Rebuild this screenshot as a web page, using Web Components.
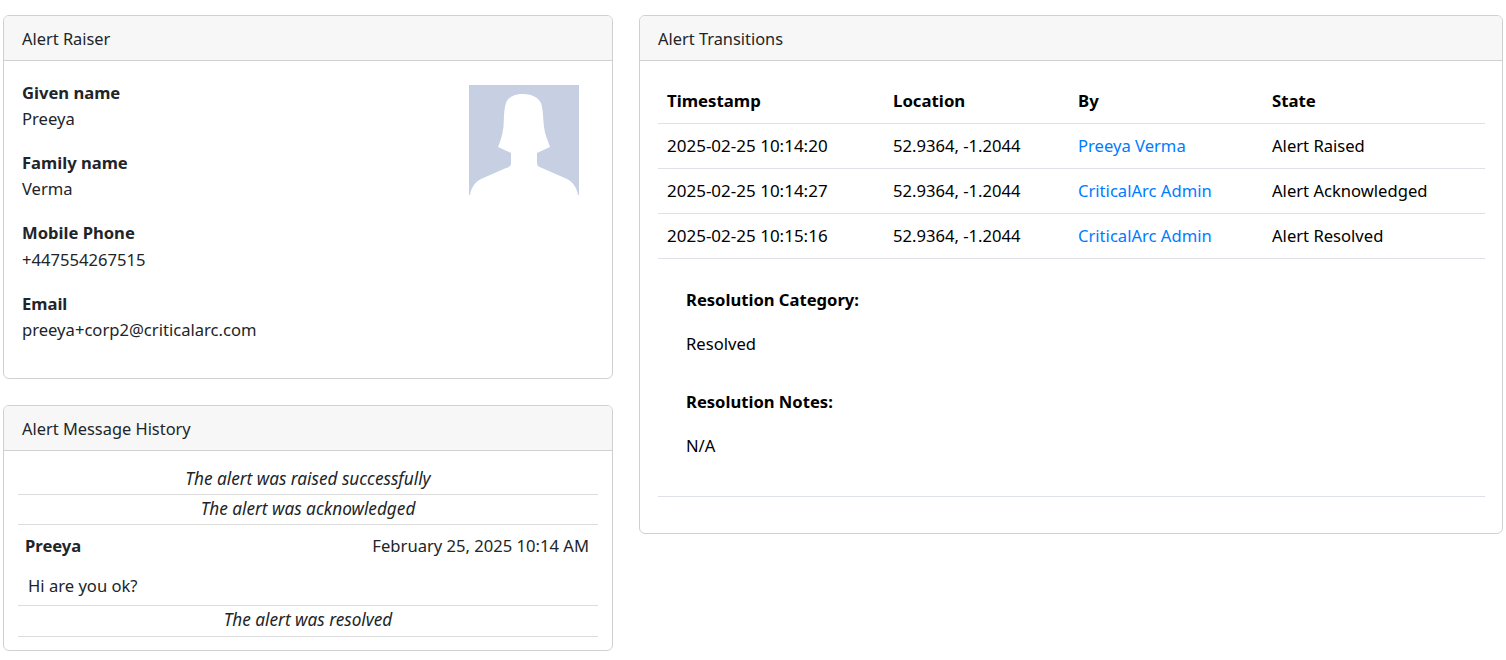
<!DOCTYPE html>
<html><head><meta charset="utf-8"><style>
html,body{margin:0;background:#fff}
body{font:16.6px/24px "Noto Sans",sans-serif;color:#212529}
</style></head><body>
<alert-page>
  <div slot="left">
  <alert-card heading="Alert Raiser"><raiser-info></raiser-info></alert-card>
  <alert-card heading="Alert Message History"><message-history></message-history></alert-card>
  </div>
  <alert-card slot="right" heading="Alert Transitions"><transitions-panel></transitions-panel></alert-card>
</alert-page>
<script>
function def(name, html){customElements.define(name,class extends HTMLElement{constructor(){super();this.attachShadow({mode:'open'}).innerHTML=html}connectedCallback(){const h=this.shadowRoot.querySelector('.h');if(h)h.textContent=this.getAttribute('heading')||''}})}
def('alert-page',`<style>:host{display:grid;grid-template-columns:610px 864px;column-gap:26px;padding:15px 3px 0;align-items:start}
::slotted([slot=left]){display:flex;flex-direction:column;gap:26px}</style><slot name="left"></slot><slot name="right"></slot>`);
def('alert-card',`<style>:host{display:block;border:1px solid #d0d0d0;border-radius:6px;overflow:hidden;background:#fff}
.h{background:#f7f7f7;border-bottom:1px solid #d0d0d0;height:44px;line-height:46px;padding:0 18px;color:#212529;font-size:16.4px}</style><div class="h"></div><slot></slot>`);
def('raiser-info',`<style>:host{display:flex;justify-content:space-between;padding:18.5px 33px 0 18px;height:317px;box-sizing:border-box}
b{display:block;font-weight:700;line-height:26.4px}
span{display:block;line-height:26.4px}
.f{margin-bottom:17.6px}svg{display:block;margin-top:5.5px}</style>
<div><div class="f"><b>Given name</b><span>Preeya</span></div>
<div class="f"><b>Family name</b><span>Verma</span></div>
<div class="f"><b>Mobile Phone</b><span>+447554267515</span></div>
<div class="f"><b>Email</b><span>preeya+corp2@criticalarc.com</span></div></div>
<svg width="110" height="110" viewBox="0 0 110 110"><rect width="110" height="110" fill="#c6d0e2"/><path fill="#fff" d="M54 9C46 9 39 12 37 18C35 24 35 32 34.5 42C33.5 50 31 57 29 62L42 68L42 78C42 81 40 82 37 83L12 94C6 97 2 103 1 110L109 110C108 103 104 97 98 94L73 83C70 82 68 81 68 78L68 68L81 62C79 56 76 50 75 42C74 32 74 24 72 18C69 12 62 9 54 9Z"/></svg>`);
def('message-history',`<style>:host{display:block;padding:13px 14px}
.s{font-style:italic;font-size:17.2px;text-align:center;border-bottom:1px solid #dcdcdc;height:30px;line-height:30px}
.s.b{height:29px;line-height:28px}.s.c{line-height:27px}
.m{border-bottom:1px solid #dcdcdc}
.t{display:flex;justify-content:space-between;padding:0 9px 0 7px;height:40px;line-height:41px}
.t b{font-weight:700}
.x{padding:0 10px;height:40px;line-height:42px}</style>
<div class="s">The alert was raised successfully</div>
<div class="s b">The alert was acknowledged</div>
<div class="m"><div class="t"><b>Preeya</b><span>February 25, 2025 10:14 AM</span></div><div class="x">Hi are you ok?</div></div>
<div class="s c">The alert was resolved</div>`);
def('transitions-panel',`<style>:host{display:block;padding:18px 17px 36px 18px;color:#000}
.g{display:grid;grid-template-columns:226px 185px 194px 1fr;border-bottom:1px solid #dee2e6}
.g>*{padding:0 8px 0 9px;height:44px;line-height:43px;border-bottom:1px solid #dee2e6}
.g>b{font-weight:700;font-size:16.8px}.g>:nth-last-child(-n+4){border-bottom:0}
.d{font-size:17px}
a{color:#007bff;text-decoration:none}
.r{padding:28px 28px 37px;border-bottom:1px solid #dee2e6}
.r b,.r div{height:26px;line-height:26px;display:block}
.r div{margin-top:18px}.r b+div+b{margin-top:32px}</style>
<div class="g"><b>Timestamp</b><b>Location</b><b>By</b><b>State</b>
<span class="d">2025-02-25 10:14:20</span><span>52.9364, -1.2044</span><a href="#">Preeya Verma</a><span>Alert Raised</span>
<span class="d">2025-02-25 10:14:27</span><span>52.9364, -1.2044</span><a href="#">CriticalArc Admin</a><span>Alert Acknowledged</span>
<span class="d">2025-02-25 10:15:16</span><span>52.9364, -1.2044</span><a href="#">CriticalArc Admin</a><span>Alert Resolved</span></div>
<div class="r"><b>Resolution Category:</b><div>Resolved</div><b>Resolution Notes:</b><div>N/A</div></div>`);
</script></body></html>
